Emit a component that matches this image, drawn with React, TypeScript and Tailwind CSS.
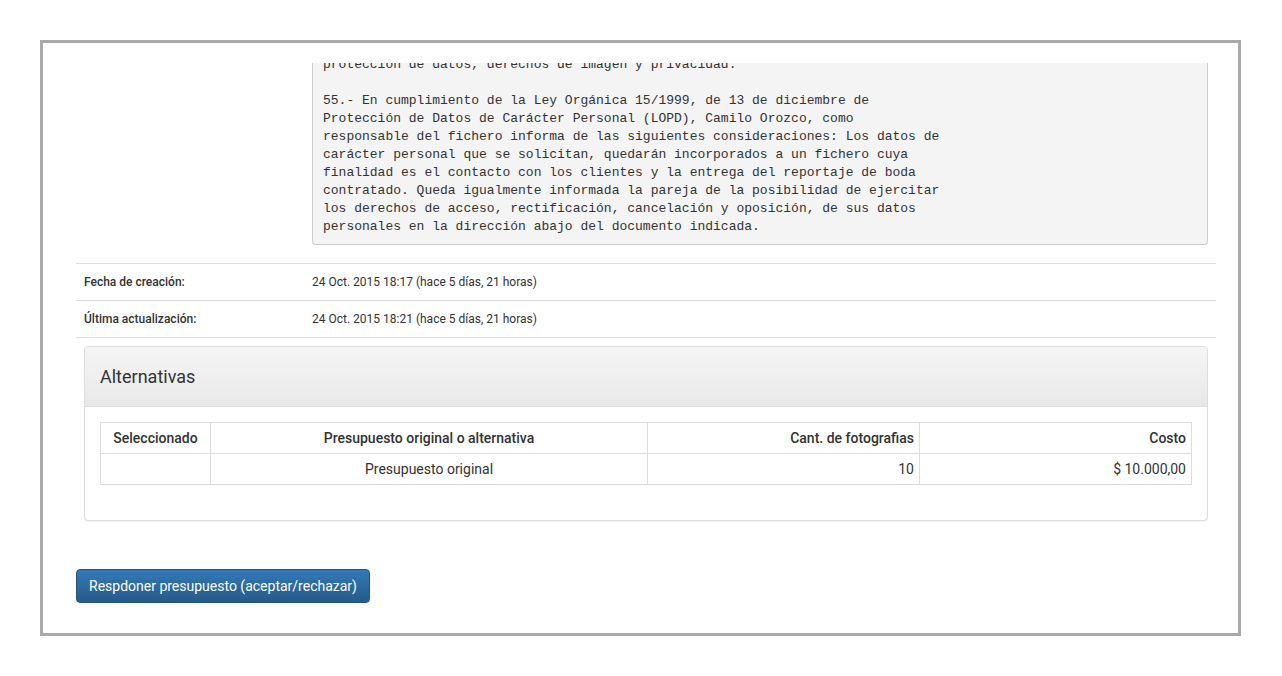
import React from 'react';

const LEGAL_TEXT = `protección de datos, derechos de imagen y privacidad.

55.- En cumplimiento de la Ley Orgánica 15/1999, de 13 de diciembre de
Protección de Datos de Carácter Personal (LOPD), Camilo Orozco, como
responsable del fichero informa de las siguientes consideraciones: Los datos de
carácter personal que se solicitan, quedarán incorporados a un fichero cuya
finalidad es el contacto con los clientes y la entrega del reportaje de boda
contratado. Queda igualmente informada la pareja de la posibilidad de ejercitar
los derechos de acceso, rectificación, cancelación y oposición, de sus datos
personales en la dirección abajo del documento indicada.`;

const META_ROWS = [
    { label: 'Fecha de creación:', value: '24 Oct. 2015 18:17 (hace 5 días, 21 horas)' },
    { label: 'Última actualización:', value: '24 Oct. 2015 18:21 (hace 5 días, 21 horas)' },
];

const ALTERNATIVES = [
    { selected: '', name: 'Presupuesto original', photos: '10', cost: '$ 10.000,00' },
];

const MetaRow: React.FC<{ label: string; value: string }> = ({ label, value }) => (
    <div className="grid grid-cols-[236px_1fr] border-b border-[#dddddd] text-[12px] leading-[20px]">
        <div className="px-2 py-2 font-medium text-[#333]">{label}</div>
        <div className="px-0 py-2 text-[#333]">{value}</div>
    </div>
);

const AlternativesPanel: React.FC = () => (
    <div className="mx-2 mt-2 rounded-[4px] border border-[#dddddd] bg-white shadow-[0_1px_1px_rgba(0,0,0,0.05)]">
        <div className="h-[60px] rounded-t-[4px] border-b border-[#dddddd] bg-gradient-to-b from-[#f5f5f5] to-[#e8e8e8] px-[15px] flex items-center">
            <h3 className="text-[18px] text-[#333] leading-none">Alternativas</h3>
        </div>
        <div className="p-[15px] pb-[35px]">
            <table className="w-full border-collapse text-[14px] leading-[20px] text-[#333]">
                <thead>
                    <tr>
                        <th className="w-[110px] border border-[#dddddd] px-[5px] py-[5px] text-center font-medium">Seleccionado</th>
                        <th className="w-[437px] border border-[#dddddd] px-[5px] py-[5px] text-center font-medium">Presupuesto original o alternativa</th>
                        <th className="w-[272px] border border-[#dddddd] px-[5px] py-[5px] text-right font-medium">Cant. de fotografias</th>
                        <th className="border border-[#dddddd] px-[5px] py-[5px] text-right font-medium">Costo</th>
                    </tr>
                </thead>
                <tbody>
                    {ALTERNATIVES.map((alt) => (
                        <tr key={alt.name}>
                            <td className="border border-[#dddddd] px-[5px] py-[5px] text-center">{alt.selected}</td>
                            <td className="border border-[#dddddd] px-[5px] py-[5px] text-center">{alt.name}</td>
                            <td className="border border-[#dddddd] px-[5px] py-[5px] text-right">{alt.photos}</td>
                            <td className="border border-[#dddddd] px-[5px] py-[5px] text-right">{alt.cost}</td>
                        </tr>
                    ))}
                </tbody>
            </table>
        </div>
    </div>
);

export default function App() {
    return (
        <div className="w-[1282px] h-[676px] bg-white pt-[40px] pl-[40px]" style={{ fontFamily: 'Roboto, "Liberation Sans", sans-serif' }}>
            <div className="w-[1201px] h-[596px] border-[3px] border-[#aaaaaa] bg-white overflow-hidden pt-[20px] pl-[33px] pr-[22px]">
                {/* description row, scrolled so the pre is cut at the top */}
                <div className="grid grid-cols-[236px_1fr] border-b border-[#dddddd]">
                    <div />
                    <div className="pr-2 pb-[18px]">
                        <div className="overflow-hidden rounded-b-[4px] border border-t-0 border-[#cccccc] bg-[#f4f4f4] px-[10px] pb-[8px]">
                            <pre
                                className="-mt-[7px] whitespace-pre text-[13px] leading-[18px] text-[#333]"
                                style={{ fontFamily: '"Liberation Mono", "Courier New", monospace' }}
                            >
                                {LEGAL_TEXT}
                            </pre>
                        </div>
                    </div>
                </div>

                {META_ROWS.map((row) => (
                    <MetaRow key={row.label} label={row.label} value={row.value} />
                ))}

                <AlternativesPanel />

                <div className="mt-[48px]">
                    <button className="h-[34px] rounded-[4px] border border-[#245580] bg-gradient-to-b from-[#337ab7] to-[#265a88] px-3 text-[14px] text-white">
                        Respdoner presupuesto (aceptar/rechazar)
                    </button>
                </div>
            </div>
        </div>
    );
}
